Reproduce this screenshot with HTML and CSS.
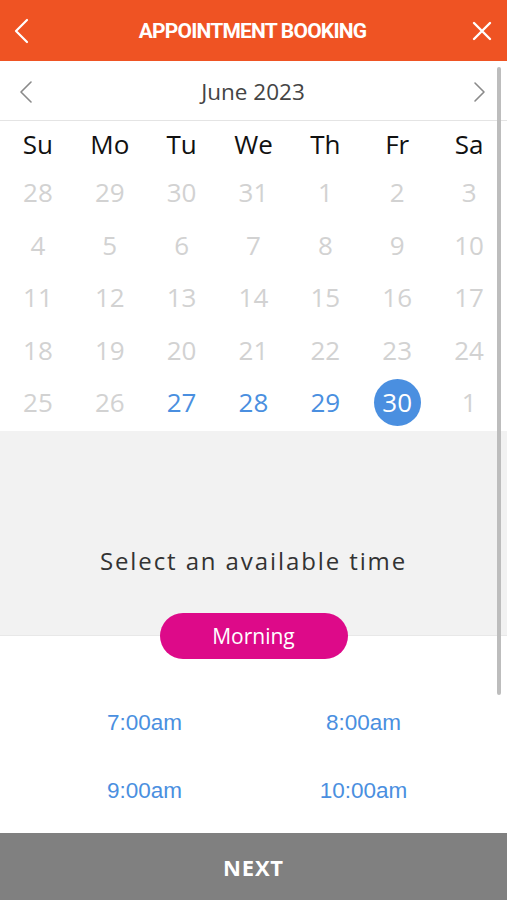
FILE: index.html
```html
<!DOCTYPE html>
<html lang="en">
<head>
    <meta charset="UTF-8">
    <meta name="viewport" content="width=device-width, initial-scale=1.0">
    <title>Appointment Booking</title>
    <link rel="stylesheet" href="styles.css">
</head>
<body>
    <header class="topbar">
        <button class="icon-btn" aria-label="Back">
            <svg width="20" height="26" viewBox="0 0 20 26"><path d="M15 2 L4 13 L15 24" fill="none" stroke="#fff" stroke-width="2.2" stroke-linecap="round" stroke-linejoin="round"/></svg>
        </button>
        <h1 class="title">APPOINTMENT BOOKING</h1>
        <button class="icon-btn" aria-label="Close">
            <svg width="22" height="22" viewBox="0 0 22 22"><path d="M3 3 L19 19 M19 3 L3 19" fill="none" stroke="#fff" stroke-width="2.4" stroke-linecap="round"/></svg>
        </button>
    </header>

    <div class="month-nav">
        <span class="nav-arrow">
            <svg width="14" height="22" viewBox="0 0 14 22"><path d="M12 1 L2 11 L12 21" fill="none" stroke="#8a8a8a" stroke-width="1.6" stroke-linecap="round" stroke-linejoin="round"/></svg>
        </span>
        <span class="month">June 2023</span>
        <span class="nav-arrow">
            <svg width="14" height="22" viewBox="0 0 14 22"><path d="M2 2 L11 11 L2 20" fill="none" stroke="#8a8a8a" stroke-width="1.6" stroke-linecap="round" stroke-linejoin="round"/></svg>
        </span>
    </div>

    <div class="calendar">
        <div class="weekdays">
            <span>Su</span><span>Mo</span><span>Tu</span><span>We</span><span>Th</span><span>Fr</span><span>Sa</span>
        </div>
        <div class="days" id="days"></div>
    </div>

    <section class="time-picker">
        <h2 class="time-title">Select an available time</h2>
        <button class="period">Morning</button>
    </section>

    <div class="slots">
        <a class="slot">7:00am</a>
        <a class="slot">8:00am</a>
        <a class="slot">9:00am</a>
        <a class="slot">10:00am</a>
    </div>

    <button class="next-btn">NEXT</button>

    <div class="scrollbar"></div>

    <script>
        // Build the June 2023 grid (starts on Sunday 28 May)
        const days = document.getElementById("days");
        const cells = [28, 29, 30, 31];
        for (let d = 1; d <= 30; d++) cells.push(d);
        cells.push(1);

        cells.forEach((num, i) => {
            const cell = document.createElement("span");
            cell.className = "day";
            const inner = document.createElement("span");
            inner.textContent = num;
            if (i < 4 || i === cells.length - 1 || num < 27) {
                cell.classList.add("muted");
            } else if (num === 30) {
                cell.classList.add("selected");
            } else {
                cell.classList.add("available");
            }
            cell.appendChild(inner);
            days.appendChild(cell);
        });
    </script>
</body>
</html>
```

FILE: styles.css
```css
* {
    box-sizing: border-box;
}

html, body {
    height: 900px;
    overflow: hidden;
}

body {
    margin: 0;
    font-family: 'Open Sans', sans-serif;
    background-color: #fff;
    color: #333;
    position: relative;
}

.topbar {
    height: 61px;
    background-color: #ef5323;
    display: flex;
    align-items: center;
    justify-content: space-between;
    padding: 0 14px 0 12px;
}

.icon-btn {
    background: none;
    border: none;
    padding: 0;
    display: flex;
    align-items: center;
    cursor: pointer;
}

.title {
    margin: 0 0 0 2px;
    color: #fff;
    font-family: 'Roboto', sans-serif;
    font-weight: 700;
    font-size: 21px;
    letter-spacing: -0.8px;
}

.month-nav {
    height: 60px;
    border-bottom: 1px solid #e4e4e4;
    display: flex;
    align-items: center;
    justify-content: space-between;
    padding: 2px 20px 0 19px;
}

.nav-arrow {
    display: flex;
}

.month {
    font-size: 22.5px;
    color: #444;
}

.calendar {
    padding: 0 2px 2px;
}

.weekdays, .days {
    display: grid;
    grid-template-columns: repeat(7, 1fr);
}

.weekdays span {
    height: 45px;
    display: flex;
    align-items: center;
    justify-content: center;
    font-size: 26px;
    color: #111;
}

.day {
    height: 52.5px;
    display: flex;
    align-items: center;
    justify-content: center;
    font-size: 26px;
}

.day span {
    width: 47px;
    height: 47px;
    border-radius: 50%;
    display: flex;
    align-items: center;
    justify-content: center;
}

.muted {
    color: #d2d2d2;
}

.available {
    color: #4a8fe0;
}

.selected span {
    background-color: #4a8fe0;
    color: #fff;
}

.time-picker {
    background: linear-gradient(#f2f2f2 0, #f2f2f2 204px, #e8e8e8 204px, #e8e8e8 205px, #fff 205px);
    padding-top: 113px;
    text-align: center;
}

.time-title {
    margin: 0;
    font-weight: 400;
    font-size: 24px;
    line-height: 34px;
    letter-spacing: 1.9px;
    color: #333;
}

.period {
    margin-top: 35px;
    width: 188px;
    height: 46px;
    border: none;
    border-radius: 23px;
    background-color: #dd0a89;
    color: #fff;
    font-family: 'Open Sans', sans-serif;
    font-size: 21px;
}

.slots {
    display: grid;
    grid-template-columns: 1fr 1fr;
    padding: 30px 34px 0 35px;
}

.slot {
    height: 68px;
    display: flex;
    align-items: center;
    justify-content: center;
    font-family: 'Liberation Sans', Arial, sans-serif;
    font-size: 22.5px;
    color: #4a8fe0;
}

.next-btn {
    display: block;
    width: 100%;
    height: 68px;
    margin-top: 8px;
    border: none;
    background-color: #808080;
    color: #fff;
    font-family: 'Open Sans', sans-serif;
    font-weight: 700;
    font-size: 22px;
    letter-spacing: 0.8px;
}

.scrollbar {
    position: absolute;
    top: 67px;
    left: 497px;
    width: 4px;
    height: 628px;
    border-radius: 2px;
    background-color: #bdbdbd;
}
```
